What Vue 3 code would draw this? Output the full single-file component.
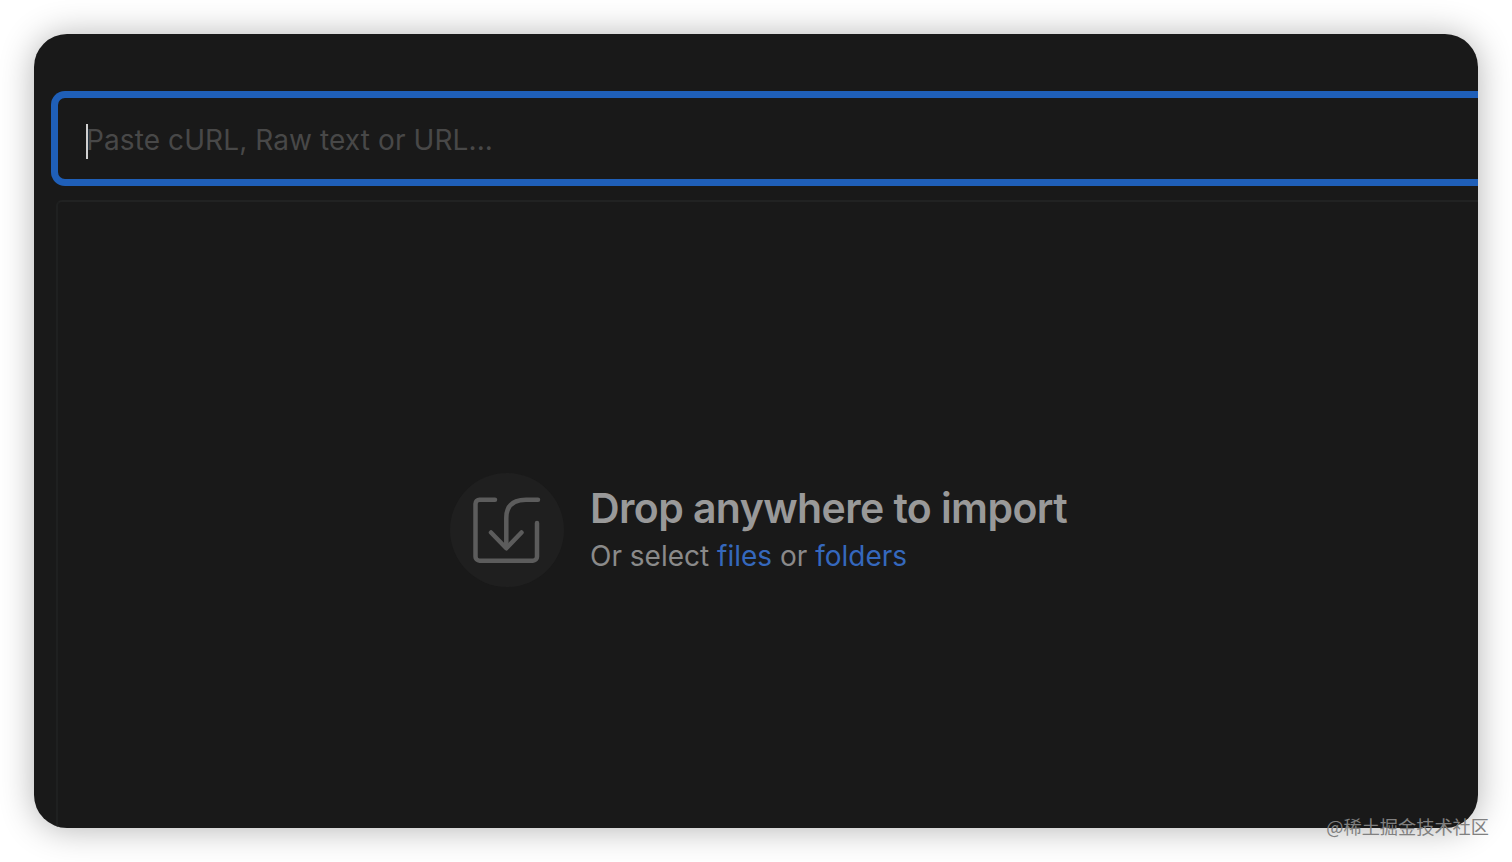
<template>
  <div class="page">
    <div class="window">
      <div class="import-input" @click="focusInput">
        <input
          ref="inputRef"
          v-model="source"
          class="import-field"
          type="text"
          placeholder="Paste cURL, Raw text or URL..."
        />
        <span v-if="!source" class="caret"></span>
      </div>

      <div class="drop-zone">
        <div class="drop-content">
          <div class="drop-icon">
            <svg width="70" height="70" viewBox="0 0 70 70" fill="none">
              <path d="M23 4.700H7.500a4 4 0 0 0-4 4v53a4 4 0 0 0 4 4h53.500a4 4 0 0 0 4-4V28" />
              <path d="M66 4.700H54C41 4.700 34.300 11 34.300 23v29" />
              <path d="M19 37.500 34.300 53.300 49.500 37.500" />
            </svg>
          </div>
          <div class="drop-text">
            <div class="drop-title">Drop anywhere to import</div>
            <div class="drop-desc">
              Or select <a class="link">files</a> or <a class="link">folders</a>
            </div>
          </div>
        </div>
      </div>
    </div>
    <div class="watermark">@稀土掘金技术社区</div>
  </div>
</template>

<script setup>
import { ref } from 'vue';

const source = ref('');
const inputRef = ref(null);

const focusInput = () => {
  inputRef.value?.focus();
};
</script>

<style>
body {
  margin: 0;
  background: #fff;
  overflow: hidden;
}
</style>

<style scoped>
.page {
  position: relative;
  box-sizing: border-box;
  width: 1512px;
  height: 862px;
  padding: 34px;
  background: #fff;
  font-family: Inter, "Liberation Sans", sans-serif;
}

.window {
  box-sizing: border-box;
  display: flex;
  flex-direction: column;
  height: 794px;
  padding: 57px 0 0 17px;
  background: #191919;
  border-radius: 33px;
  overflow: hidden;
  box-shadow: 0 1px 34px rgba(0, 0, 0, 0.3);
}

.import-input {
  position: relative;
  box-sizing: border-box;
  flex: 0 0 auto;
  display: flex;
  align-items: center;
  height: 95px;
  padding: 2px 0 0 28px;
  border: 7px solid #1f5fb8;
  border-right: 0;
  border-radius: 14px 0 0 14px;
}

.import-field {
  flex: 1;
  padding: 0;
  border: 0;
  outline: none;
  background: transparent;
  color: #ddd;
  font-family: inherit;
  font-size: 28px;
  letter-spacing: 0.1px;
  height: 40px;
}

.import-field::placeholder {
  color: #484848;
  opacity: 1;
}

.caret {
  position: absolute;
  left: 28px;
  top: 26px;
  width: 2px;
  height: 35px;
  background: #d0d0d0;
}

.drop-zone {
  flex: 1;
  display: flex;
  margin: 14px 0 0 5px;
  border-top: 2px solid #212222;
  border-left: 2px solid #1f2020;
  border-top-left-radius: 6px;
}

.drop-content {
  display: flex;
  align-items: flex-start;
  gap: 26px;
  margin: 271px 0 0 392px;
}

.drop-icon {
  display: flex;
  align-items: center;
  justify-content: center;
  width: 114px;
  height: 114px;
  border-radius: 50%;
  background: #1f1f1f;
}

.drop-icon svg path {
  stroke: #5c5c5c;
  stroke-width: 4.5;
  stroke-linecap: round;
  stroke-linejoin: round;
}

.drop-text {
  padding-top: 10px;
  white-space: nowrap;
}

.drop-title {
  color: #999;
  font-size: 41px;
  font-weight: 600;
  line-height: 50px;
  letter-spacing: -0.59px;
}

.drop-desc {
  color: #8a8a8a;
  font-size: 28px;
  line-height: 46px;
}

.link {
  color: #3568bd;
  cursor: pointer;
}

.watermark {
  position: absolute;
  right: 23px;
  bottom: 22px;
  color: #808080;
  font-family: "Noto Sans CJK SC", sans-serif;
  font-size: 18.2px;
  line-height: 28px;
}
</style>
